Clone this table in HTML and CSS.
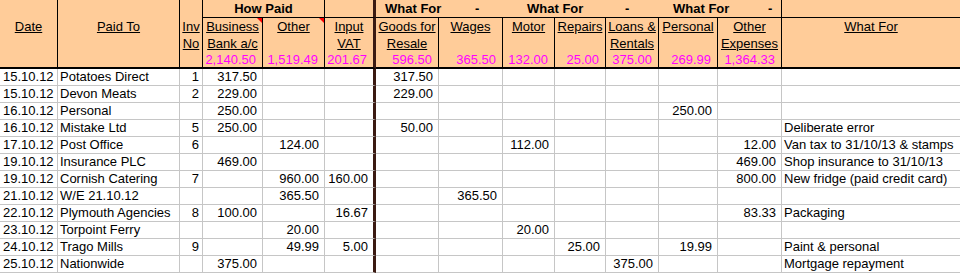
FILE: index.html
```html
<!DOCTYPE html>
<html>
<head>
<meta charset="utf-8">
<link rel="stylesheet" href="styles.css">
</head>
<body>
<div class="sheet">
  <div class="head">
    <div class="h fixed c1"><u>Date</u></div>
    <div class="h fixed c2"><u>Paid To</u></div>
    <div class="h fixed c3"><u>Inv</u><br><u>No</u></div>
    <div class="h top howpaid">How Paid</div>
    <div class="h top vattop"></div>
    <div class="h top whatfor">
      <span class="slot s1">What For</span><span class="slot s2">-</span><span class="slot s3">What For</span><span class="slot s4">-</span><span class="slot s5">What For</span><span class="slot s6">-</span>
    </div>
    <div class="h top last"></div>

    <div class="h lab"><span class="l"><u>Business</u></span><span class="l"><u>Bank a/c</u></span><span class="tot">2,140.50</span><i class="note"></i></div>
    <div class="h lab"><span class="l"><u>Other</u></span><span class="l"></span><span class="tot">1,519.49</span><i class="note"></i></div>
    <div class="h lab vat"><span class="l"><u>Input</u></span><span class="l"><u>VAT</u></span><span class="tot">201.67</span></div>
    <div class="h lab"><span class="l"><u>Goods for</u></span><span class="l"><u>Resale</u></span><span class="tot">596.50</span></div>
    <div class="h lab"><span class="l"><u>Wages</u></span><span class="l"></span><span class="tot">365.50</span></div>
    <div class="h lab"><span class="l"><u>Motor</u></span><span class="l"></span><span class="tot">132.00</span></div>
    <div class="h lab"><span class="l"><u>Repairs</u></span><span class="l"></span><span class="tot">25.00</span></div>
    <div class="h lab"><span class="l"><u>Loans &amp;</u></span><span class="l"><u>Rentals</u></span><span class="tot">375.00</span></div>
    <div class="h lab"><span class="l"><u>Personal</u></span><span class="l"></span><span class="tot">269.99</span></div>
    <div class="h lab"><span class="l"><u>Other</u></span><span class="l"><u>Expenses</u></span><span class="tot">1,364.33</span></div>
    <div class="h lab last"><span class="l"><u>What For</u></span><span class="l"></span><span class="tot"></span></div>
  </div>

  <div class="row"><div class="c d">15.10.12</div><div class="c t">Potatoes Direct</div><div class="c inv">1</div><div class="c n">317.50</div><div class="c n"></div><div class="c n"></div><div class="c n">317.50</div><div class="c n"></div><div class="c n"></div><div class="c n"></div><div class="c n"></div><div class="c n"></div><div class="c n"></div><div class="c t"></div></div>
  <div class="row"><div class="c d">15.10.12</div><div class="c t">Devon Meats</div><div class="c inv">2</div><div class="c n">229.00</div><div class="c n"></div><div class="c n"></div><div class="c n">229.00</div><div class="c n"></div><div class="c n"></div><div class="c n"></div><div class="c n"></div><div class="c n"></div><div class="c n"></div><div class="c t"></div></div>
  <div class="row"><div class="c d">16.10.12</div><div class="c t">Personal</div><div class="c inv"></div><div class="c n">250.00</div><div class="c n"></div><div class="c n"></div><div class="c n"></div><div class="c n"></div><div class="c n"></div><div class="c n"></div><div class="c n"></div><div class="c n">250.00</div><div class="c n"></div><div class="c t"></div></div>
  <div class="row"><div class="c d">16.10.12</div><div class="c t">Mistake Ltd</div><div class="c inv">5</div><div class="c n">250.00</div><div class="c n"></div><div class="c n"></div><div class="c n">50.00</div><div class="c n"></div><div class="c n"></div><div class="c n"></div><div class="c n"></div><div class="c n"></div><div class="c n"></div><div class="c t">Deliberate error</div></div>
  <div class="row"><div class="c d">17.10.12</div><div class="c t">Post Office</div><div class="c inv">6</div><div class="c n"></div><div class="c n">124.00</div><div class="c n"></div><div class="c n"></div><div class="c n"></div><div class="c n">112.00</div><div class="c n"></div><div class="c n"></div><div class="c n"></div><div class="c n">12.00</div><div class="c t">Van tax to 31/10/13 &amp; stamps</div></div>
  <div class="row"><div class="c d">19.10.12</div><div class="c t">Insurance PLC</div><div class="c inv"></div><div class="c n">469.00</div><div class="c n"></div><div class="c n"></div><div class="c n"></div><div class="c n"></div><div class="c n"></div><div class="c n"></div><div class="c n"></div><div class="c n"></div><div class="c n">469.00</div><div class="c t">Shop insurance to 31/10/13</div></div>
  <div class="row"><div class="c d">19.10.12</div><div class="c t">Cornish Catering</div><div class="c inv">7</div><div class="c n"></div><div class="c n">960.00</div><div class="c n">160.00</div><div class="c n"></div><div class="c n"></div><div class="c n"></div><div class="c n"></div><div class="c n"></div><div class="c n"></div><div class="c n">800.00</div><div class="c t">New fridge (paid credit card)</div></div>
  <div class="row"><div class="c d">21.10.12</div><div class="c t">W/E 21.10.12</div><div class="c inv"></div><div class="c n"></div><div class="c n">365.50</div><div class="c n"></div><div class="c n"></div><div class="c n">365.50</div><div class="c n"></div><div class="c n"></div><div class="c n"></div><div class="c n"></div><div class="c n"></div><div class="c t"></div></div>
  <div class="row"><div class="c d">22.10.12</div><div class="c t">Plymouth Agencies</div><div class="c inv">8</div><div class="c n">100.00</div><div class="c n"></div><div class="c n">16.67</div><div class="c n"></div><div class="c n"></div><div class="c n"></div><div class="c n"></div><div class="c n"></div><div class="c n"></div><div class="c n">83.33</div><div class="c t">Packaging</div></div>
  <div class="row"><div class="c d">23.10.12</div><div class="c t">Torpoint Ferry</div><div class="c inv"></div><div class="c n"></div><div class="c n">20.00</div><div class="c n"></div><div class="c n"></div><div class="c n"></div><div class="c n">20.00</div><div class="c n"></div><div class="c n"></div><div class="c n"></div><div class="c n"></div><div class="c t"></div></div>
  <div class="row"><div class="c d">24.10.12</div><div class="c t">Trago Mills</div><div class="c inv">9</div><div class="c n"></div><div class="c n">49.99</div><div class="c n">5.00</div><div class="c n"></div><div class="c n"></div><div class="c n"></div><div class="c n">25.00</div><div class="c n"></div><div class="c n">19.99</div><div class="c n"></div><div class="c t">Paint &amp; personal</div></div>
  <div class="row"><div class="c d">25.10.12</div><div class="c t">Nationwide</div><div class="c inv"></div><div class="c n">375.00</div><div class="c n"></div><div class="c n"></div><div class="c n"></div><div class="c n"></div><div class="c n"></div><div class="c n"></div><div class="c n">375.00</div><div class="c n"></div><div class="c n"></div><div class="c t">Mortgage repayment</div></div>
</div>
</body>
</html>
```
FILE: styles.css
```css
:root {
  --cols: 58px 122px 23px 60px 62px 51px 63px 64px 52px 51px 53px 59px 64px 178px;
  --grid: #c6c6c6;
  --sep: #3b1a12;
}
html, body {
  margin: 0;
  padding: 0;
  background: #ffffff;
}
body {
  width: 960px;
  font-family: "Liberation Sans", Arial, sans-serif;
  font-size: 13px;
  color: #000;
}
.sheet {
  width: 960px;
}
.head {
  display: grid;
  grid-template-columns: var(--cols);
  grid-template-rows: 18px 51px;
  background: #ffcc99;
}
.h {
  box-sizing: border-box;
  border-right: 1px solid #000;
  line-height: 17px;
  position: relative;
  white-space: nowrap;
}
.h.last {
  border-right: none;
}
.fixed {
  grid-row: 1 / 3;
  text-align: center;
  padding-top: 18px;
  border-bottom: 2px solid #000;
}
.c1 { grid-column: 1; }
.c2 { grid-column: 2; }
.c3 { grid-column: 3; line-height: 17px; }
.top {
  border-bottom: 1px solid #000;
  font-weight: bold;
}
.howpaid {
  grid-column: 4 / 6;
  text-align: center;
}
.vattop {
  grid-column: 6;
  border-right: 3px solid var(--sep);
}
.whatfor {
  grid-column: 7 / 14;
  display: flex;
}
.slot { display: block; }
.s1 { width: 99px; padding-left: 9px; box-sizing: border-box; }
.s2 { width: 52px; }
.s3 { width: 98px; }
.s4 { width: 48px; }
.s5 { width: 95px; }
.s6 { width: 13px; }
.lab {
  grid-row: 2;
  display: flex;
  flex-direction: column;
  text-align: center;
  border-bottom: 2px solid #000;
}
.lab.vat {
  border-right: 3px solid var(--sep);
}
.l {
  height: 17px;
}
.tot {
  height: 15px;
  line-height: 16px;
  text-align: right;
  padding-right: 6px;
  color: #ff00ff;
}
.note {
  position: absolute;
  top: 0;
  right: 0;
  width: 0;
  height: 0;
  border-top: 5px solid #ff0000;
  border-left: 5px solid transparent;
}
.row {
  display: grid;
  grid-template-columns: var(--cols);
  height: 17px;
}
.c {
  box-sizing: border-box;
  border-right: 1px solid var(--grid);
  border-bottom: 1px solid var(--grid);
  line-height: 16px;
  height: 17px;
  white-space: nowrap;
  overflow: visible;
}
.row > .c:nth-child(6) {
  border-right: 3px solid var(--sep);
}
.row > .c:last-child {
  border-right: none;
}
.d { padding-left: 3px; }
.t { padding-left: 2px; }
.inv { text-align: right; padding-right: 3px; }
.n { text-align: right; padding-right: 5px; }
```
